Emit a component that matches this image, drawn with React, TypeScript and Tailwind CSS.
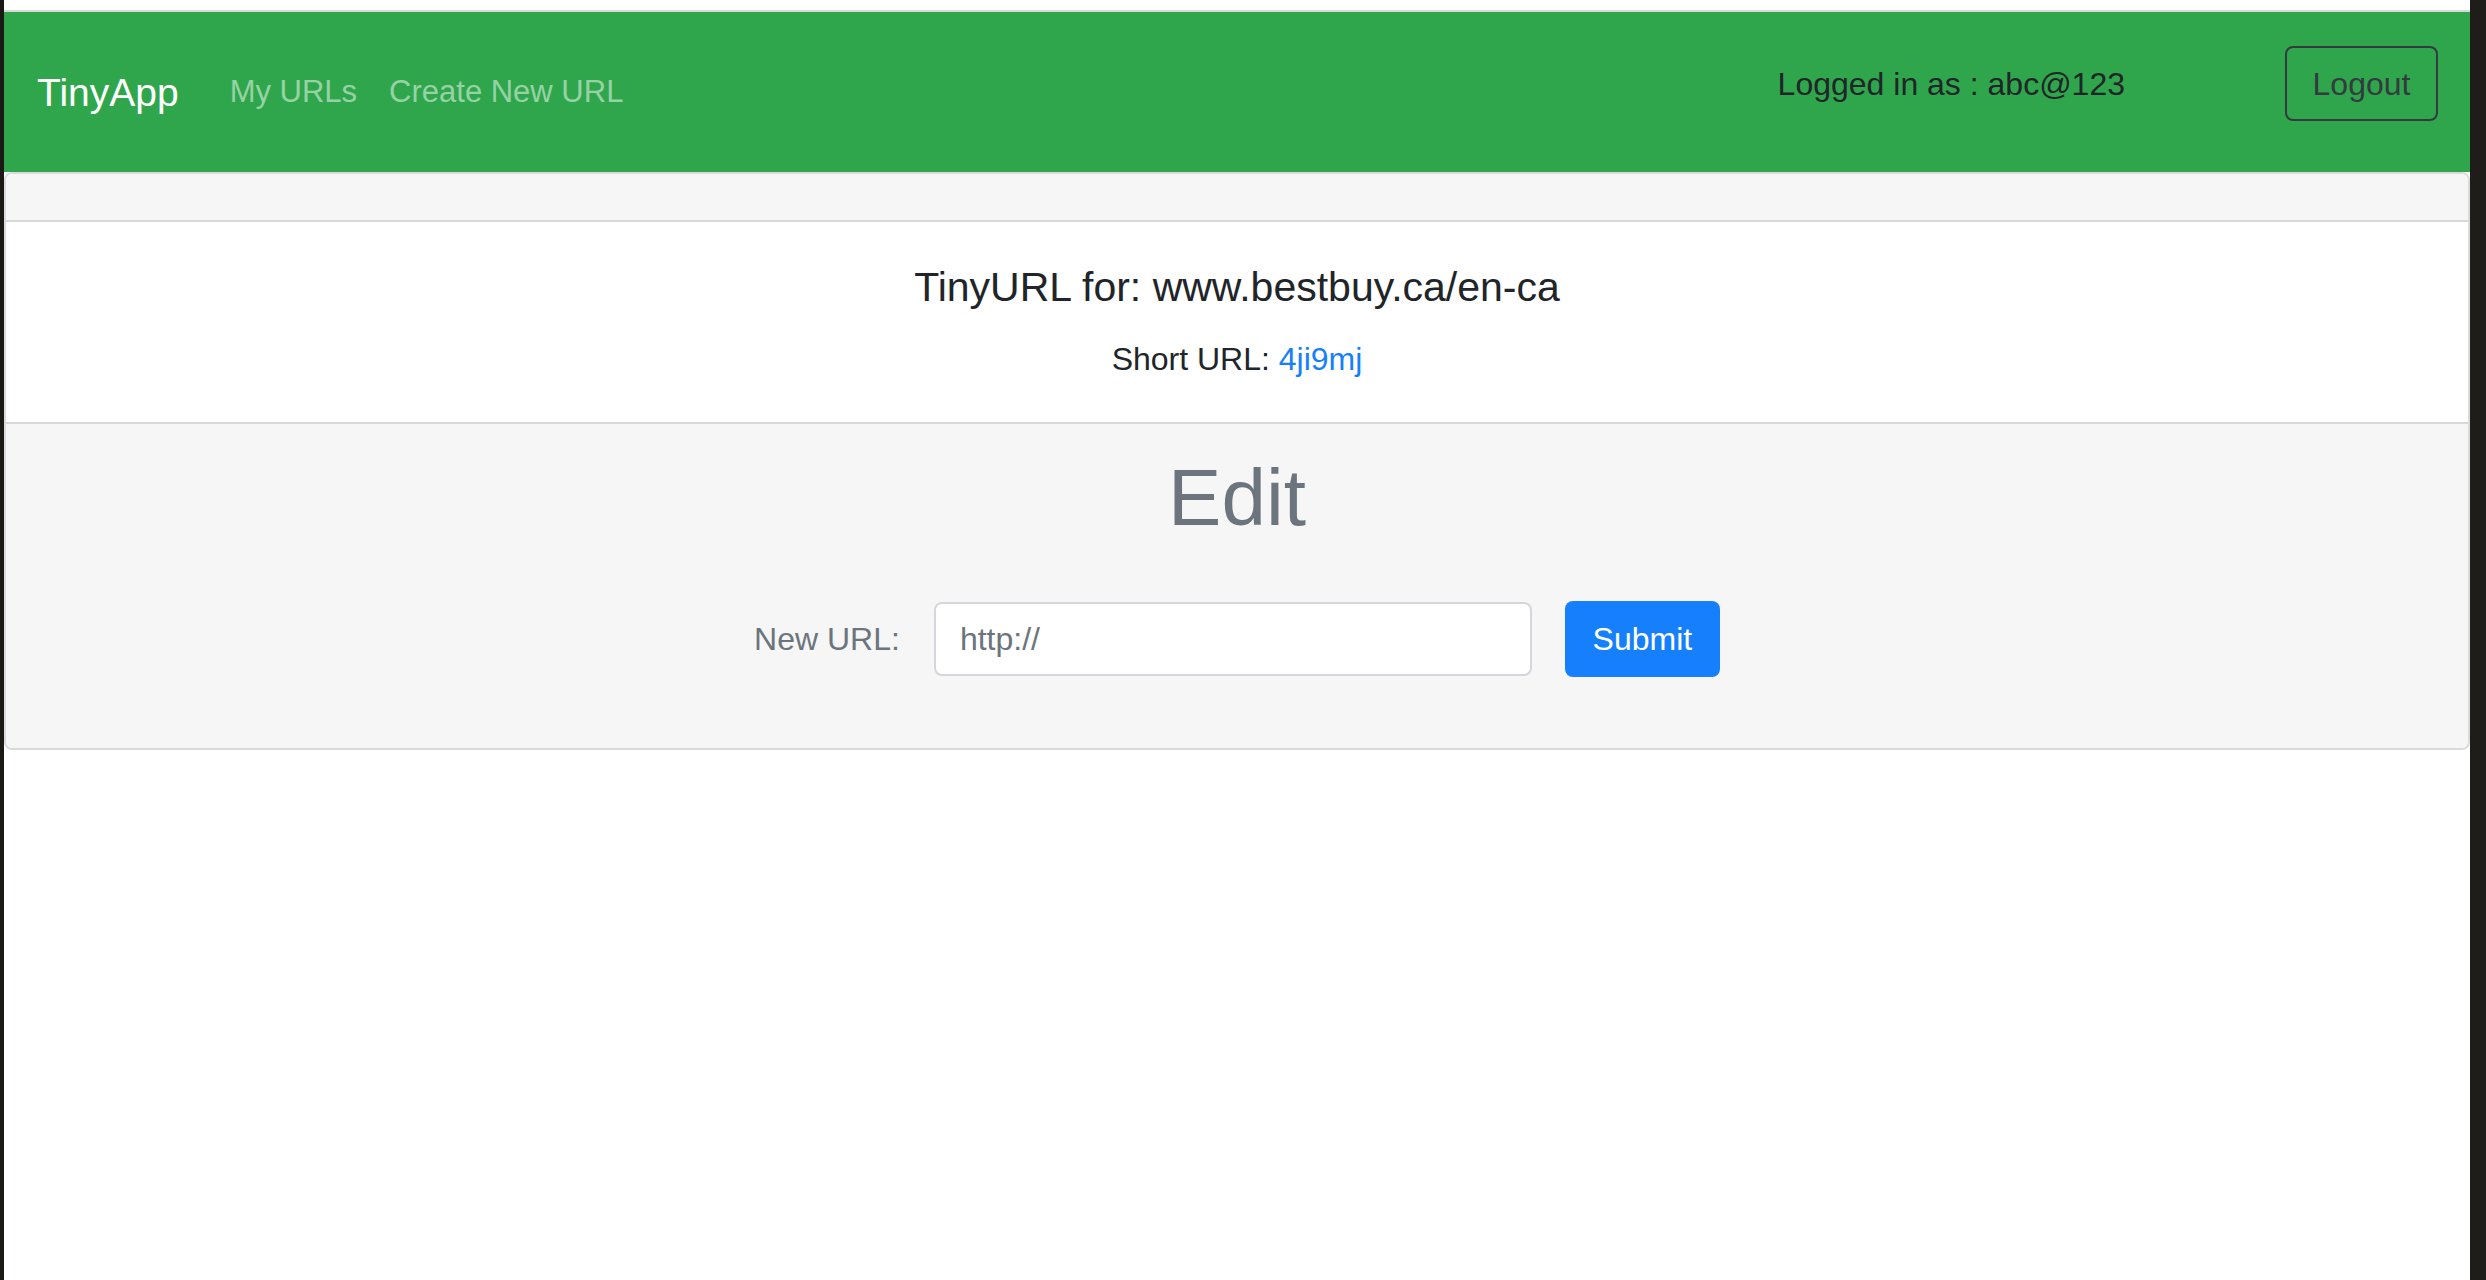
export default function App() {
  return (
    <div className="flex min-h-[1280px] w-full bg-white font-['Liberation_Sans',Arial,sans-serif]">
      {/* dark window edges */}
      <div className="w-[4px] shrink-0 bg-[#1b1915]" />

      <div className="flex flex-1 flex-col">
        <div className="h-[10px] bg-white" />
        <div className="h-[2px] bg-[#d9d9d9]" />

        <Navbar />

        <div className="flex flex-col overflow-hidden rounded-[8px] border-2 border-[#dadada]">
          <div className="h-[48px] border-b-2 border-[#d8d8d8] bg-[#f6f6f6]" />

          <div className="flex h-[200px] flex-col items-center bg-white pt-[41px]">
            <h5 className="text-[41px] leading-[48px] text-[#212529]">
              TinyURL for: www.bestbuy.ca/en-ca
            </h5>
            <p className="mt-[24px] text-[32px] leading-[48px] text-[#212529]">
              Short URL: <a className="text-[#167ffc]">4ji9mj</a>
            </p>
          </div>

          <div className="flex h-[326px] flex-col items-center border-t-2 border-[#d8d8d8] bg-[#f6f6f6] pt-[26px]">
            <h1 className="text-[80px] leading-[96px] text-[#6c757d]">Edit</h1>
            <form
              className="mt-[55px] flex items-center"
              onSubmit={(e) => e.preventDefault()}
            >
              <label className="mr-[34px] text-[32px] leading-[48px] text-[#6c757d]">
                New URL:
              </label>
              <input
                type="text"
                placeholder="http://"
                className="h-[74px] w-[598px] rounded-[8px] border-2 border-[#d3d7dc] bg-white px-[24px] text-[32px] text-[#495057] outline-none placeholder:text-[#6c757d]"
              />
              <button
                type="submit"
                className="ml-[33px] h-[76px] w-[155px] rounded-[8px] bg-[#167ffc] text-[32px] text-white"
              >
                Submit
              </button>
            </form>
          </div>
        </div>
      </div>

      <div className="w-[16px] shrink-0 bg-[#1e1d1a]" />
    </div>
  );
}

const Navbar = () => {
  return (
    <nav className="flex h-[160px] items-center bg-[#2fa64b] pl-[33px] pr-[32px]">
      <a className="mr-[35px] pt-[2px] text-[39px] leading-[60px] text-white">TinyApp</a>
      <a className="px-[16px] text-[31px] leading-[48px] text-[#97d2a5]">My URLs</a>
      <a className="px-[16px] text-[31px] leading-[48px] text-[#97d2a5]">Create New URL</a>

      <div className="ml-auto mb-[17px] flex items-center">
        <span className="mr-[160px] text-[32px] leading-[48px] text-[#212529]">
          Logged in as : abc@123
        </span>
        <button className="h-[75px] w-[153px] rounded-[8px] border-2 border-[#343a40] text-[32px] text-[#343a40]">
          Logout
        </button>
      </div>
    </nav>
  );
}
